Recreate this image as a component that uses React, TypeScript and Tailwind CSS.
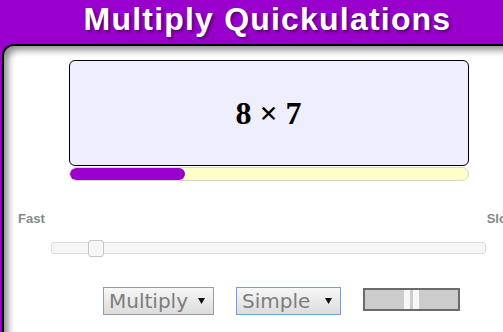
import { useState } from 'react'

function Caret() {
  return (
    <svg width="7" height="6" viewBox="0 0 7 6" className="flex-shrink-0">
      <path d="M0 0 L7 0 L3.5 6 Z" fill="#111" />
    </svg>
  )
}

function FakeSelect({ label, width, focused }: { label: string; width: string; focused?: boolean }) {
  return (
    <div
      className={`${width} h-[28px] flex items-center justify-between pl-[5px] pr-[8px] border bg-gradient-to-b from-[#f7f7f7] to-[#dcdcdc] ${
        focused ? 'border-[#6f9de8]' : 'border-[#9a9a9a]'
      }`}
    >
      <span className="text-[20px] leading-none text-[#7d7d7d] font-['DejaVu_Sans',Verdana,sans-serif]">{label}</span>
      <Caret />
    </div>
  )
}

export default function App() {
  const [progress] = useState(29)
  const [thumbLeft] = useState(36)

  return (
    <div className="w-[503px] h-[332px] overflow-hidden bg-[#9900cc]">
      <div className="w-[535px] font-['Liberation_Sans',Arial,sans-serif]">
        <h1 className="h-[44px] leading-[38px] text-center text-white text-[32px] font-bold tracking-[1.2px] [text-shadow:2px_2px_3px_rgba(0,0,0,0.45)]">
          Multiply Quickulations
        </h1>

        <div className="ml-[2px] h-[300px] bg-white border-2 border-black rounded-t-[12px] shadow-[inset_4px_4px_7px_rgba(0,0,0,0.45)]">
          <div className="pt-[14px]">
            <div className="w-[400px] h-[106px] mx-auto flex items-center justify-center bg-[#eeeefd] border border-black rounded-[6px]">
              <span className="text-[32px] font-bold text-black font-['Liberation_Serif','Times_New_Roman',serif]">8 × 7</span>
            </div>

            <div className="w-[400px] h-[14px] mx-auto mt-[1px] bg-[#ffffcc] border border-[#d8d8c0] rounded-full overflow-hidden">
              <div className="h-full bg-[#9900cc] rounded-full" style={{ width: `${progress}%` }} />
            </div>
          </div>

          <div className="mt-[30px] flex justify-between pl-[14px] pr-[16px] text-[13px] font-bold leading-[16px] text-[#888]">
            <span>Fast</span>
            <span>Slow</span>
          </div>

          <div className="relative w-[435px] h-[12px] mx-auto mt-[15px] bg-[#f5f5f5] border border-[#dddddd] rounded-[3px]">
            <div
              className="absolute top-[-3px] w-[16px] h-[17px] bg-[#f6f6f6] border border-[#c5c5c5] rounded-[3px]"
              style={{ left: thumbLeft }}
            />
          </div>

          <div className="mt-[33px] ml-[99px] flex items-start">
            <FakeSelect label="Multiply" width="w-[111px]" />
            <div className="ml-[22px]">
              <FakeSelect label="Simple" width="w-[105px]" focused />
            </div>
            <button className="ml-[22px] mt-[1px] w-[97px] h-[23px] flex items-center justify-center gap-[3px] bg-[#cccccc] border-2 border-[#6b6b6b]">
              <span className="w-[6px] h-[19px] bg-[#f7f7f7]" />
              <span className="w-[6px] h-[19px] bg-[#f7f7f7]" />
            </button>
          </div>
        </div>
      </div>
    </div>
  )
}
